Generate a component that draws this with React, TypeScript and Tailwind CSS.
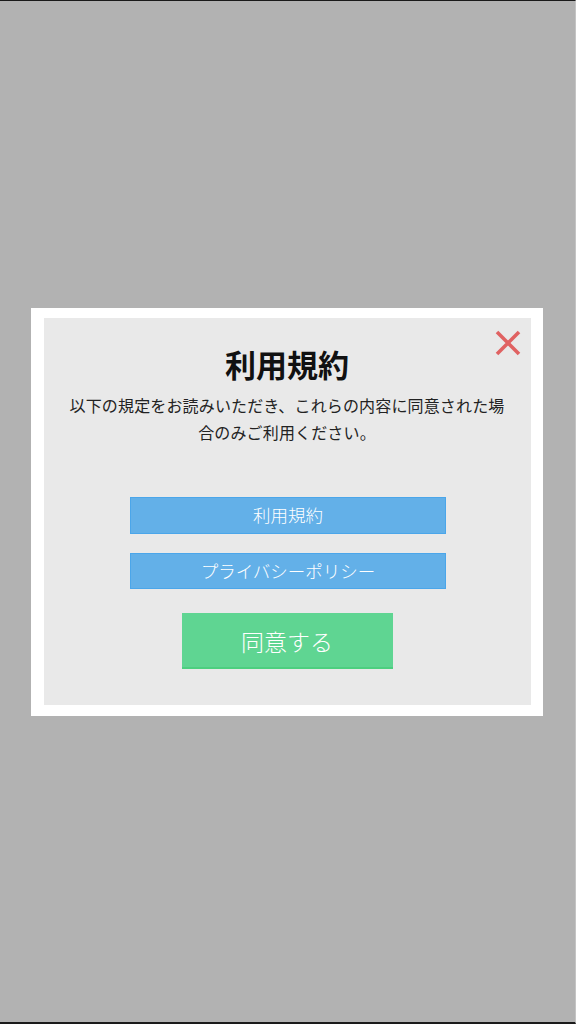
import React from 'react';

const CloseIcon = () => (
  <svg width="26" height="26" viewBox="0 0 26 26" fill="none">
    <path d="M2 2 L24 24 M24 2 L2 24" stroke="#e06262" strokeWidth="3.6" strokeLinecap="butt" />
  </svg>
);

const App = () => {
  return (
    <div
      className="w-[576px] h-[1024px] flex items-center justify-center bg-[#b2b2b2] border-t border-b-2 border-[#1a1a1a] border-r border-r-[#c4c4c4]"
      style={{ fontFamily: '"Noto Sans CJK JP", "Noto Sans", sans-serif' }}
    >
      <div className="w-[512px] bg-white pt-[10px] pb-[11px] pl-[13px] pr-[12px] ml-[-2px]">
        <div className="relative bg-[#e9e9e9] h-[387px] pt-[22px] flex flex-col items-center">
          <button type="button" className="absolute top-[12px] right-[10px]">
            <CloseIcon />
          </button>
          <h1 className="text-[31px] leading-[48px] h-[48px] font-bold text-[#111]">利用規約</h1>
          <p className="mt-[4px] px-[24px] text-[16px] tracking-[0.15px] leading-[27px] text-[#222] text-center">
            以下の規定をお読みいただき、これらの内容に同意された場合のみご利用ください。
          </p>
          <button
            type="button"
            className="mt-[51px] ml-[2px] w-[316px] h-[37px] pt-[1px] bg-[#63b0e8] border border-[#4ba6ea] text-white text-[17.5px] font-light"
          >
            利用規約
          </button>
          <button
            type="button"
            className="mt-[19px] ml-[2px] w-[316px] h-[36px] pt-[1px] bg-[#63b0e8] border border-[#4ba6ea] text-white text-[17.5px] font-light"
          >
            プライバシーポリシー
          </button>
          <button
            type="button"
            className="mt-[24px] w-[211px] h-[56px] pt-[3px] bg-[#5fd592] border-b-2 border-[#4ccf7f] text-white text-[23px] font-light"
          >
            同意する
          </button>
        </div>
      </div>
    </div>
  );
};

export default App;
